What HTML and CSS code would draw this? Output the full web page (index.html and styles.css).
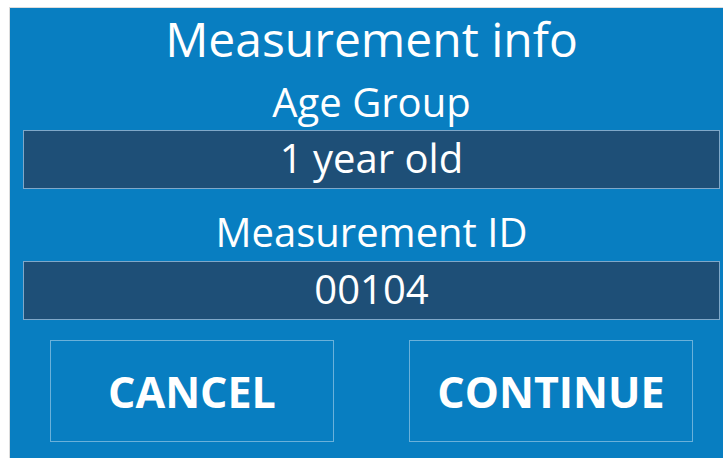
FILE: index.html
```html
<!DOCTYPE html>
<html lang="en">
<head>
<meta charset="utf-8">
<title>Measurement info</title>
<link rel="stylesheet" href="styles.css">
</head>
<body>
  <main class="panel">
    <h1 class="title">Measurement info</h1>
    <section class="field">
      <div class="field-label">Age Group</div>
      <div class="field-value">1 year old</div>
    </section>
    <section class="field field-second">
      <div class="field-label">Measurement ID</div>
      <div class="field-value">00104</div>
    </section>
    <div class="actions">
      <button class="btn" type="button">CANCEL</button>
      <button class="btn" type="button">CONTINUE</button>
    </div>
  </main>
</body>
</html>
```

FILE: styles.css
```css
html, body {
  margin: 0;
  padding: 0;
  background: #ffffff;
  overflow: hidden;
}

body {
  width: 723px;
  height: 458px;
  padding: 7px 0 0 9px;
  box-sizing: border-box;
  font-family: "Open Sans", "Noto Sans", sans-serif;
  color: #ffffff;
}

.panel {
  width: 740px;
  height: 451px;
  box-sizing: border-box;
  background: #087ec1;
  border-top: 1px solid #dcdcdc;
  border-left: 1px solid #dcdcdc;
  padding: 0 0 0 13px;
}

.panel > * {
  width: 697px;
}

.title {
  margin: 0;
  font-weight: 400;
  font-size: 48px;
  line-height: 61px;
  text-align: center;
}

.field-label {
  font-size: 40px;
  line-height: 57px;
  padding-top: 4px;
  text-align: center;
}

.field-second .field-label {
  line-height: 59px;
  padding-top: 13px;
}

.field-value {
  box-sizing: border-box;
  height: 59px;
  padding-bottom: 4px;
  background: #1e4f77;
  border: 1px solid #7fa8c9;
  font-size: 40px;
  line-height: 53px;
  text-align: center;
}

.actions {
  display: flex;
  gap: 75px;
  padding: 20px 27px 0;
  box-sizing: border-box;
}

.btn {
  flex: 1;
  height: 102px;
  background: transparent;
  border: 1px solid rgba(255, 255, 255, 0.4);
  color: #ffffff;
  font-family: "Open Sans", "Noto Sans", sans-serif;
  font-weight: 700;
  font-size: 43px;
  padding: 0;
}
```
